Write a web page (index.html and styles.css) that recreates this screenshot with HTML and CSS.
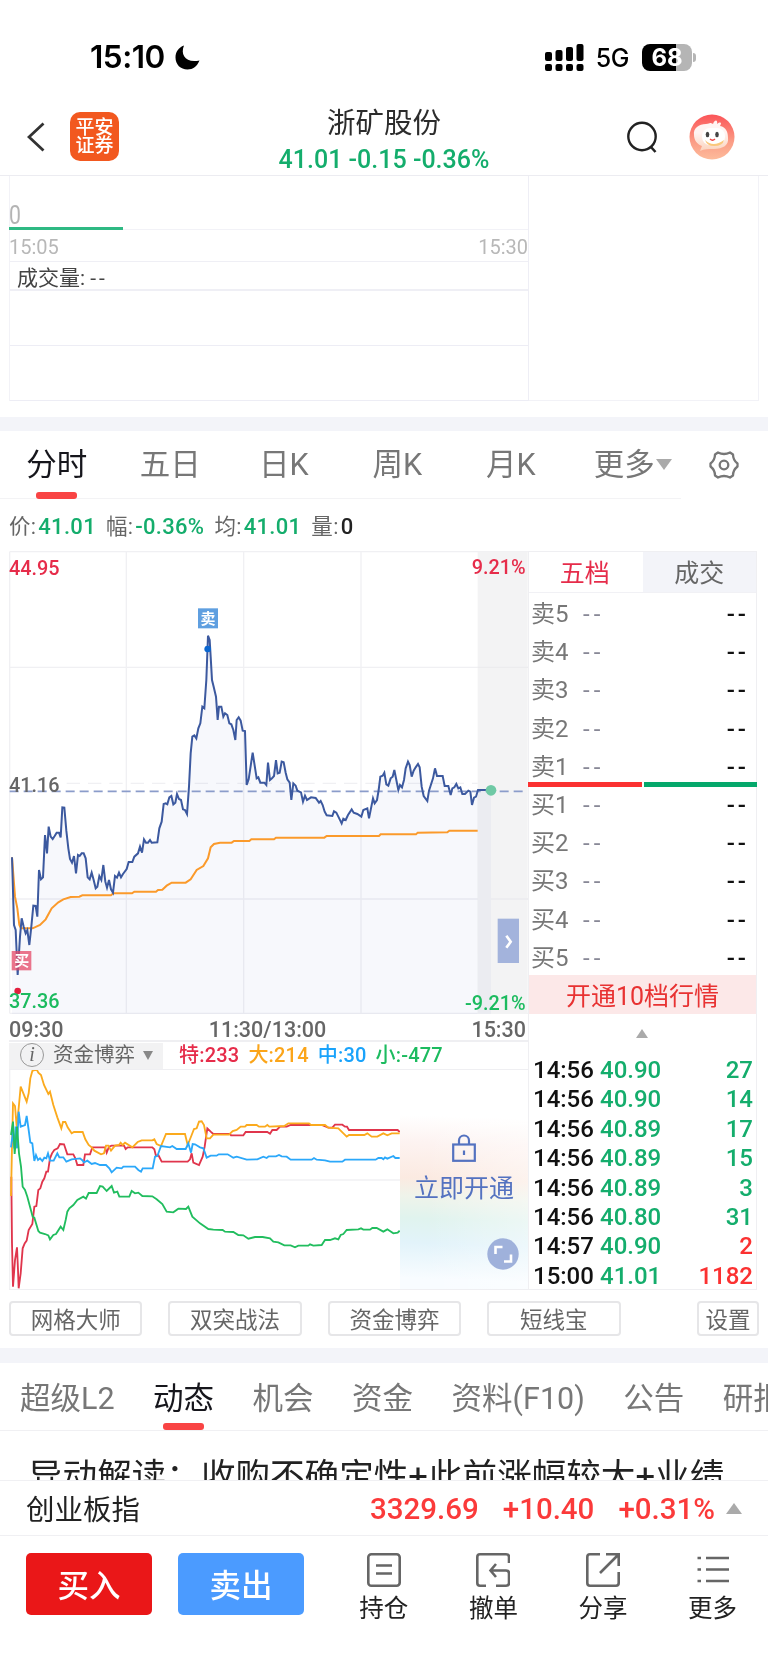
FILE: index.html
```html
<!DOCTYPE html>
<html lang="zh-CN">
<head>
    <meta charset="UTF-8">
    <meta name="viewport" content="width=device-width, initial-scale=1.0">
    <title>浙矿股份</title>
    <link rel="stylesheet" href="styles.css">
</head>
<body>
    <div class="status-bar">
        <span class="clock">15:10</span>
        <svg class="moon" width="25" height="25" viewBox="0 0 25 25"><path d="M9 0.5C5 10 11 18.500 24.500 15.500C22 21.500 18 24.500 12.500 24.500C5.500 24.500 0.500 19.500 0.500 12.500C0.500 7 3.500 2.500 9 0.500Z" fill="#000"/></svg>
        <svg class="signal" width="39" height="27" viewBox="0 0 39 27">
            <g fill="#000">
                <rect x="0" y="8" width="7" height="9" rx="2"/><rect x="10.500" y="6" width="7" height="11" rx="2"/>
                <rect x="21" y="3" width="7" height="14" rx="2"/><rect x="31.500" y="0" width="7" height="17" rx="2"/>
                <rect x="0" y="20" width="7" height="7" rx="2"/><rect x="10.500" y="20" width="7" height="7" rx="2"/>
                <rect x="21" y="20" width="7" height="7" rx="2"/><rect x="31.500" y="20" width="7" height="7" rx="2"/>
            </g>
        </svg>
        <span class="network">5G</span>
        <span class="battery">68</span>
        <span class="battery-cap"></span>
    </div>

    <header class="nav">
        <div class="nav-side">
            <svg class="back" width="18" height="30" viewBox="0 0 18 30"><path d="M16.500 1.500L2 15L16.500 28.500" fill="none" stroke="#333" stroke-width="2.800"/></svg>
            <div class="logo"><span>平安</span><span>证券</span></div>
        </div>
        <div class="nav-title">
            <h1>浙矿股份</h1>
            <p>41.01 -0.15 -0.36%</p>
        </div>
        <div class="nav-side nav-right">
            <svg width="31" height="32" viewBox="0 0 31 32"><circle cx="15" cy="15.500" r="13.700" fill="none" stroke="#222" stroke-width="2.400"/><path d="M23.500 25.500L28.500 31" stroke="#222" stroke-width="2.600"/></svg>
            <svg class="avatar" width="46" height="46" viewBox="0 0 46 46">
                <defs>
                    <linearGradient id="avatarBg" x1="0" y1="0" x2="0" y2="1"><stop offset="0" stop-color="#fb5458"/><stop offset=".6" stop-color="#fb9c85"/><stop offset="1" stop-color="#fdbb9b"/></linearGradient>
                    <linearGradient id="face" x1="0" y1="0" x2="0" y2="1"><stop offset=".4" stop-color="#fff4f2"/><stop offset="1" stop-color="#fbd3bd"/></linearGradient>
                </defs>
                <circle cx="23" cy="23" r="22.500" fill="url(#avatarBg)"/>
                <path d="M5 21C4 14 10 10 17 10C21 10 20 8 24 10C26 5 29 6 28 10C32 7 33 9 31 12C37 13 39 18 39 24C40 31 34 35 25 35C20 35 15 35 11 37L13 32C8 30 5 26 5 21Z" fill="url(#face)"/>
                <rect x="13" y="14" width="23" height="17" rx="8" fill="#fff"/>
                <path d="M16 26Q24 34 35 26Q34 32 25 32Q18 32 16 26Z" fill="#fac87c"/>
                <ellipse cx="18.500" cy="20.500" rx="1.800" ry="2.800" fill="#444"/><ellipse cx="28" cy="20.500" rx="1.800" ry="2.800" fill="#444"/>
                <path d="M21 25Q23.500 27.500 26 25" fill="none" stroke="#e44" stroke-width="1.300"/>
            </svg>
        </div>
    </header>

    <section class="after-hours">
        <div class="after-chart">
            <div class="after-price"><span>0</span></div>
            <div class="after-times"><span>15:05</span><span>15:30</span></div>
            <div class="after-volume">成交量: <span>--</span></div>
            <div class="after-cell"></div>
            <div class="after-cell"></div>
        </div>
        <div class="after-side"></div>
    </section>

    <div class="period-bar">
        <div class="period-tabs">
            <span class="active">分时</span>
            <span>五日</span>
            <span>日K</span>
            <span>周K</span>
            <span>月K</span>
            <span>更多<i class="arrow-down"></i></span>
        </div>
        <svg class="gear" width="30" height="30" viewBox="0 0 30 30" fill="none" stroke="#777" stroke-width="2.300" stroke-linejoin="round"><path d="M9 2.500Q15 5.500 21 2.500L24 4.500Q24 10 28.500 13.500V16.500Q24 20 24 25.500L21 27.500Q15 24.500 9 27.500L6 25.500Q6 20 1.500 16.500V13.500Q6 10 6 4.500Z"/><circle cx="15" cy="15" r="4.300"/></svg>
    </div>

    <div class="quote-line">
        <span>价:<b>41.01</b></span>
        <span>幅:<b>-0.36%</b></span>
        <span>均:<b>41.01</b></span>
        <span>量:<b class="dark">0</b></span>
    </div>

    <main class="market">
        <div class="charts">
            <svg class="price-chart" viewBox="27 33 1557 1389">
                <g fill="none" stroke="#f0f0f3" stroke-width="4">
                    <path d="M29 35H1584M29 382H1584M29 1077H1584M29 1420H1584M29 35V1420M379 35V1420M731 35V1420M1083 35V1420"/>
                    <path d="M200 730H1433" stroke-dasharray="40 24"/>
                </g>
                <rect x="1433" y="35" width="150" height="1387" fill="#f3f3f4"/>
                <path d="M1433 382H1584M1433 1077H1584" stroke="#ececee" stroke-width="4"/>
                <path class="area" d="M36,952 42,1155 47,1170 53,1305 60,1190 65,1135 71,1160 77,1180 82,1170 88,1215 94,1160 100,1097 107,1098 112,1130 117,990 123,1018 129,1012 135,885 141,940 146,860 152,890 158,897 170,878 177,878 182,892 187,802 193,803 199,872 205,925 210,957 216,968 222,948 228,1000 234,945 251,940 257,955 263,1012 275,998 287,1045 298,1008 304,1020 310,975 316,1025 327,1020 339,1058 345,1008 357,998 369,1002 386,966 397,966 414,940 426,938 432,898 472,907 478,865 485,845 491,792 514,768 531,762 549,808 561,822 567,740 572,640 577,590 589,595 601,550 607,500 613,505 619,420 624,287 629,300 636,420 648,470 653,540 657,500 670,530 682,525 694,553 706,600 710,540 722,542 735,573 740,735 758,638 770,715 799,735 804,668 810,720 828,660 839,698 845,665 857,698 874,780 880,730 903,757 909,785 933,772 962,783 980,826 1025,850 1055,808 1084,830 1107,835 1119,775 1141,710 1153,698 1165,737 1183,690 1195,750 1212,720 1224,665 1235,710 1254,672 1265,740 1282,783 1305,685 1328,708 1352,765 1369,732 1387,762 1411,755 1416,795 1434,750 1433,1422 36,1422Z"/>
                <rect x="1433" y="750" width="40" height="672" fill="#ebecf1"/>
                <path d="M29 754H1580" stroke="#8b9cca" stroke-width="5" stroke-dasharray="27 15"/>
                <polyline class="average" points="36,952 45,1070 52,1105 58,1155 63,1165 98,1165 120,1155 137,1138 155,1105 175,1087 190,1078 212,1071 238,1070 247,1066 333,1066 340,1060 396,1060 403,1055 468,1055 474,1050 487,1049 500,1037 515,1028 557,1028 572,1018 590,990 610,978 624,955 632,922 642,912 660,908 695,908 702,903 748,903 754,898 822,898 828,893 973,893 980,888 1137,888 1142,883 1248,883 1253,878 1342,877 1348,872 1433,872"/>
                <polyline class="price" points="36,952 42,1155 47,1170 53,1305 60,1190 65,1135 71,1160 77,1180 82,1170 88,1215 94,1160 100,1097 107,1098 112,1130 117,990 123,1018 129,1012 135,885 141,940 146,860 152,890 158,897 164,888 170,878 177,878 182,892 187,802 193,803 199,872 205,925 210,957 216,968 222,948 228,1000 234,945 239,948 245,940 251,940 257,955 263,1012 269,1018 275,998 281,1020 287,1045 292,1040 298,1008 304,1020 310,975 316,1025 321,1043 327,1020 333,1048 339,1058 345,1008 351,1013 357,998 363,1012 369,1002 380,987 386,966 397,966 403,950 414,940 420,920 426,938 432,898 438,908 444,908 450,900 455,908 472,907 478,865 485,845 491,792 497,790 502,793 508,772 514,768 520,793 526,788 531,762 537,777 543,780 549,808 555,810 561,822 567,740 572,640 577,590 583,586 589,595 595,565 601,550 607,500 613,505 619,420 624,287 629,300 632,350 636,420 641,440 648,470 653,540 657,500 664,500 670,530 675,520 682,525 688,550 694,553 700,570 706,600 710,540 716,532 722,542 728,572 735,573 740,735 746,718 758,638 770,715 775,712 781,728 793,728 799,735 804,668 810,720 816,715 822,708 828,660 833,700 839,698 845,665 851,667 857,698 862,718 869,728 874,780 880,730 887,737 892,752 903,757 909,785 915,767 921,780 933,772 947,774 957,788 962,783 968,795 974,815 980,826 997,828 1002,814 1009,818 1015,830 1025,850 1030,836 1037,840 1044,825 1055,808 1061,818 1072,822 1084,830 1090,810 1102,805 1107,835 1119,775 1124,790 1131,780 1136,750 1141,710 1148,707 1153,698 1159,733 1165,737 1172,715 1178,710 1183,690 1189,720 1195,750 1200,735 1206,742 1212,720 1217,685 1224,665 1229,675 1235,710 1241,692 1247,682 1254,672 1259,682 1265,740 1271,768 1282,783 1287,752 1299,715 1305,685 1311,708 1328,708 1334,738 1345,738 1352,765 1357,745 1363,742 1369,732 1375,745 1381,742 1387,762 1395,762 1405,752 1411,755 1416,795 1422,773 1428,770 1434,750 1473,750"/>
                <circle cx="1473" cy="751" r="16" fill="#6fc9a5"/>
                <circle cx="623" cy="327" r="10" fill="#0b67d0"/>
                <circle cx="53" cy="1353" r="10" fill="#e3203e"/>
                <rect x="594" y="205" width="60" height="60" fill="#5f9fe0"/>
                <rect x="35" y="1233" width="59" height="58" fill="#e54867" fill-opacity=".75"/>
                <g class="marker"><text x="624" y="251">卖</text><text x="65" y="1279">买</text></g>
                <g class="labels">
                    <text class="up" x="27" y="105">44.95</text>
                    <text class="up end" x="1577" y="101">9.21%</text>
                    <text x="27" y="755">41.16</text>
                    <text class="down" x="27" y="1405">37.36</text>
                    <text class="down end" x="1577" y="1410">-9.21%</text>
                </g>
                <rect x="1493" y="1136" width="64" height="133" fill="#a3b3dc"/>
                <path d="M1519 1187L1532 1205L1519 1223" fill="none" stroke="#fff" stroke-width="8"/>
            </svg>
            <div class="time-axis"><span>09:30</span><span>11:30/13:00</span><span>15:30</span></div>
            <div class="flow-head">
                <div class="flow-select"><i class="info">i</i>资金博弈<i class="arrow-down small"></i></div>
                <span class="super">特:233</span>
                <span class="large">大:214</span>
                <span class="middle">中:30</span>
                <span class="little">小:-477</span>
            </div>
            <div class="flow-body">
                <svg class="flow-chart" viewBox="27 120 1173 657">
                    <path d="M27 450H1200M29 120V777" stroke="#f1f1f3" stroke-width="4"/>
                    <polyline stroke="#e0354c" points="34,440 36,640 39,770 45,690 51,652 54,720 56,775 62,730 68,655 74,640 80,632 86,600 97,582 103,530 109,528 115,480 121,475 127,455 133,445 139,425 144,425 150,385 156,370 163,360 173,355 180,342 192,343 202,373 220,373 226,385 232,405 250,405 255,373 270,373 277,352 315,352 320,368 327,350 335,347 372,347 377,357 383,352 457,352 463,358 468,378 475,375 485,395 563,395 570,388 575,370 580,398 597,405 608,380 614,350 622,295 632,305 640,312 690,312 693,316 730,316 737,306 802,306 810,311 817,300 830,300 840,290 860,290 872,285 965,285 985,293 997,293 1005,284 1027,284 1035,290 1041,290 1047,300 1193,300 1199,306"/>
                    <polyline stroke="#fbaa1d" points="33,498 36,350 39,220 45,228 50,290 56,235 62,170 68,185 80,215 86,190 91,145 97,123 110,118 115,128 123,135 132,165 145,192 150,185 160,225 172,262 184,295 189,276 196,276 203,292 215,310 222,306 248,306 256,328 266,345 275,352 283,362 303,373 312,370 318,347 325,347 333,362 345,347 357,345 362,338 368,345 375,338 397,352 413,336 425,331 457,331 463,328 470,342 483,348 498,312 555,312 563,345 575,315 582,297 590,295 597,275 605,274 612,285 620,325 630,325 640,314 687,314 698,303 710,300 722,290 735,290 740,285 770,285 777,290 795,290 802,285 808,290 853,288 865,280 927,280 933,285 975,285 985,293 1015,295 1040,320 1047,315 1093,315 1102,310 1115,320 1132,320 1150,310 1162,316 1175,310 1199,310"/>
                    <polyline stroke="#2ba8fa" points="33,352 39,305 43,355 47,290 51,355 56,245 62,290 75,285 80,258 86,300 91,337 97,340 103,393 108,375 114,390 120,385 127,393 133,383 139,385 144,370 150,392 161,392 172,370 178,382 190,382 199,395 215,388 240,385 246,390 252,397 262,392 275,402 285,399 300,405 318,405 328,415 335,427 350,413 365,415 370,410 405,410 415,420 423,425 428,415 458,415 465,380 472,378 483,348 510,352 517,348 530,357 557,357 565,340 573,368 578,342 585,343 600,352 610,355 620,383 632,377 650,377 656,373 683,373 700,383 710,380 740,389 772,388 790,380 800,384 806,379 828,379 837,375 845,379 860,380 872,389 935,389 942,384 950,389 975,391 990,395 1027,395 1035,389 1127,389 1135,384 1145,384 1150,388 1155,382 1162,386 1180,378 1186,384 1199,384"/>
                    <polyline stroke="#21bd5e" points="33,315 39,275 44,372 51,290 57,370 63,410 68,470 75,480 82,500 98,560 103,563 115,603 120,608 135,612 145,616 150,628 160,615 168,612 182,590 190,600 197,570 202,545 208,535 220,525 232,510 250,500 258,506 266,489 290,489 300,468 308,470 320,483 335,468 342,488 352,485 358,500 388,500 395,483 405,490 415,488 427,498 457,499 470,508 487,522 500,545 520,547 535,536 558,537 565,530 577,560 600,580 625,597 640,599 668,600 675,605 700,606 715,615 730,616 745,626 765,621 788,621 810,625 820,635 835,637 853,646 872,646 885,652 895,647 925,647 930,643 940,647 965,645 975,630 990,630 1005,625 1015,628 1022,615 1030,612 1040,600 1075,598 1083,595 1090,599 1110,599 1117,594 1130,594 1150,605 1162,598 1180,610 1193,608 1199,602"/>
                </svg>
                <div class="unlock">
                    <svg width="24" height="28" viewBox="0 0 24 28" fill="none" stroke="#5472c0" stroke-width="2.200"><rect x="1.200" y="10.500" width="21.600" height="16.300"/><path d="M7 10.500V6.500A5 5 0 0 1 17 6.500V10.500M12 16.500V21"/></svg>
                    <span>立即开通</span>
                    <svg class="expand" width="32" height="32" viewBox="0 0 32 32"><circle cx="16" cy="16" r="15.700" fill="#9fb1db"/><path d="M8.500 16V9H15.500M24 16.500V23.500H17" fill="none" stroke="#fff" stroke-width="2.600"/></svg>
                </div>
            </div>
        </div>

        <aside class="depth">
            <div class="depth-tabs"><span class="active">五档</span><span>成交</span></div>
            <ul class="book">
                <li>卖5<i>--</i><b>--</b></li>
                <li>卖4<i>--</i><b>--</b></li>
                <li>卖3<i>--</i><b>--</b></li>
                <li>卖2<i>--</i><b>--</b></li>
                <li class="last-ask">卖1<i>--</i><b>--</b></li>
                <li>买1<i>--</i><b>--</b></li>
                <li>买2<i>--</i><b>--</b></li>
                <li>买3<i>--</i><b>--</b></li>
                <li>买4<i>--</i><b>--</b></li>
                <li>买5<i>--</i><b>--</b></li>
            </ul>
            <div class="promo">开通10档行情</div>
            <div class="collapse"><i class="arrow-up"></i></div>
            <ul class="trades">
                <li><span>14:56</span><b>40.90</b><em>27</em></li>
                <li><span>14:56</span><b>40.90</b><em>14</em></li>
                <li><span>14:56</span><b>40.89</b><em>17</em></li>
                <li><span>14:56</span><b>40.89</b><em>15</em></li>
                <li><span>14:56</span><b>40.89</b><em>3</em></li>
                <li><span>14:56</span><b>40.80</b><em>31</em></li>
                <li><span>14:57</span><b>40.90</b><em class="buy">2</em></li>
                <li><span>15:00</span><b>41.01</b><em class="buy">1182</em></li>
            </ul>
        </aside>
    </main>

    <div class="tools">
        <button>网格大师</button>
        <button>双突战法</button>
        <button>资金博弈</button>
        <button>短线宝</button>
        <button class="setting">设置</button>
    </div>

    <div class="info-tabs">
        <span>超级L2</span>
        <span class="active">动态</span>
        <span>机会</span>
        <span>资金</span>
        <span>资料(F10)</span>
        <span>公告</span>
        <span>研报</span>
    </div>

    <div class="news">异动解读：收购不确定性+此前涨幅较大+业绩</div>

    <div class="index-row">
        <span class="index-name">创业板指</span>
        <span>3329.69</span>
        <span>+10.40</span>
        <span>+0.31%</span>
        <i class="arrow-up"></i>
    </div>

    <footer class="actions">
        <button class="buy-btn">买入</button>
        <button class="sell-btn">卖出</button>
        <nav>
            <a><svg viewBox="0 0 34 34"><rect x="1.300" y="1.300" width="31.400" height="31.400" rx="3"/><path d="M9 12.500H25M9 20.500H25"/></svg>持仓</a>
            <a><svg viewBox="0 0 34 34"><path d="M33 10V4Q33 1.300 30 1.300H4Q1.300 1.300 1.300 4V30Q1.300 32.700 4 32.700H10M20 11L14.500 17.500L20 24M15 17.500H30Q33 17.500 33 20.500V30Q33 32.700 30 32.700H20"/></svg>撤单</a>
            <a><svg viewBox="0 0 34 34"><path d="M14 1.300H4Q1.300 1.300 1.300 4V30Q1.300 32.700 4 32.700H30Q32.700 32.700 32.700 30V19M20 1.300H32.700V13M32 2L14 20"/></svg>分享</a>
            <a><svg viewBox="0 0 34 34"><path d="M1.500 5H5M10 5H33M1.500 16.500H5M10 16.500H33M1.500 28H5M10 28H33"/></svg>更多</a>
        </nav>
    </footer>
</body>
</html>
```
FILE: styles.css
```css
* {
    box-sizing: border-box;
}

body {
    margin: 0;
    width: 768px;
    height: 1670px;
    overflow: hidden;
    background: #fff;
    color: #666;
    font-family: Roboto, "Noto Sans CJK SC", sans-serif;
}

h1, p, ul {
    margin: 0;
    padding: 0;
    font-weight: 400;
}

ul {
    list-style: none;
}

i, em {
    font-style: normal;
}

b {
    font-weight: 500;
}

svg {
    display: block;
    flex: none;
}

button {
    padding: 0;
    font-family: inherit;
}

.arrow-down, .arrow-up {
    display: inline-block;
    flex: none;
    border: 8px solid transparent;
}

.arrow-down {
    border-top: 11px solid #aaa;
    border-bottom: 0;
}

.arrow-up {
    border-bottom: 11px solid #aaa;
    border-top: 0;
}

.arrow-down.small {
    border-width: 9px 5px 0;
    border-top-color: #888;
}

/* status bar */
.status-bar {
    display: flex;
    align-items: center;
    height: 97px;
    padding: 17px 72px 0 90px;
    color: #000;
}

.clock {
    width: 85px;
    font: 600 31.500px/30px Inter, sans-serif;
    letter-spacing: -0.5px;
}

.signal {
    margin-left: auto;
}

.network {
    margin: 2px 13px 0 12px;
    font: 500 25px/24px Inter, sans-serif;
    letter-spacing: -0.5px;
}

.battery {
    width: 50px;
    height: 27px;
    border-radius: 8px;
    background: linear-gradient(90deg, #000 68%, #b5b5b5 68%);
    color: #fff;
    font: 700 24px/27px Inter, sans-serif;
    text-align: center;
}

.battery-cap {
    width: 3px;
    height: 9px;
    margin-left: 1px;
    border-radius: 0 3px 3px 0;
    background: #b5b5b5;
}

/* title */
.nav {
    display: flex;
    height: 79px;
    border-bottom: 1px solid #ececf1;
}

.nav-side {
    display: flex;
    align-items: center;
    width: 234px;
    height: 79px;
    padding-left: 27px;
}

.logo {
    display: flex;
    flex-direction: column;
    justify-content: center;
    width: 49px;
    height: 49px;
    margin-left: 25px;
    border-radius: 10px;
    background: #f2581f;
    color: #fff;
    font-size: 19px;
    font-weight: 500;
    line-height: 18px;
    text-align: center;
}

.nav-title {
    flex: 1;
    padding-top: 8px;
    text-align: center;
}

.nav-title h1 {
    color: #2c2c2c;
    font-size: 28.500px;
    line-height: 38px;
}

.nav-title p {
    color: #14ad6c;
    font-size: 25px;
    font-weight: 500;
    line-height: 33px;
}

.nav-right {
    justify-content: flex-end;
    padding: 0 33px 0 0;
}

.avatar {
    margin-left: 31px;
}

/* after-hours chart */
.after-hours {
    display: flex;
    height: 241px;
    padding: 0 9px 16px 9px;
}

.after-chart {
    width: 520px;
    border-left: 1px solid #f2f2f7;
    border-right: 1px solid #eeeef5;
}

.after-side {
    flex: 1;
    border-right: 1px solid #f2f2f7;
    border-bottom: 1px solid #f2f2f7;
}

.after-price {
    height: 54px;
    padding-top: 26px;
    border-bottom: 1px solid #f2f2f7;
    color: #b4b4b4;
    font-size: 25px;
    line-height: 27px;
}

.after-price span {
    display: block;
    height: 26px;
    margin-left: -1px;
    transform: scaleX(0.85);
    transform-origin: left;
}

.after-price::after {
    content: "";
    display: block;
    width: 114px;
    height: 3px;
    margin: -1px 0 0 -1px;
    background: #2fb983;
}

.after-times {
    display: flex;
    justify-content: space-between;
    height: 31px;
    margin-left: -1px;
    color: #b8b8b8;
    font-size: 20px;
    line-height: 35px;
}

.after-volume {
    height: 30px;
    padding-left: 7px;
    border: solid #efeff5;
    border-width: 1px 0 2px;
    color: #444;
    font-size: 21px;
    line-height: 32px;
}

.after-volume span {
    letter-spacing: 3px;
}

.after-cell {
    height: 55px;
    border-bottom: 1px solid #ededf5;
}

/* period tabs */
.period-bar {
    display: flex;
    height: 82px;
    border-top: 14px solid #f3f4f9;
}

.period-tabs {
    display: grid;
    grid-template-columns: repeat(6, 1fr);
    width: 681px;
    height: 68px;
    border-bottom: 1px solid #f3f3f5;
    color: #777;
    font-size: 30.500px;
    line-height: 67px;
    text-align: center;
}

.period-tabs .arrow-down {
    margin: 0 -17px 5px 1px;
}

.period-tabs .active, .info-tabs .active {
    color: #16161c;
    font-weight: 400;
}

.active::after {
    content: "";
    display: block;
    width: 41px;
    height: 7px;
    margin: -6px auto 0;
    border-radius: 3px;
    background: #f94444;
}

.gear {
    margin: 19px 0 0 28px;
}

.quote-line {
    display: flex;
    gap: 10px;
    height: 52px;
    padding-left: 9px;
    font-size: 21.500px;
    line-height: 56px;
    letter-spacing: 0.300px;
}

.quote-line b {
    margin-left: 2px;
    font-size: 22px;
    color: #14ad6c;
}

.quote-line .dark {
    color: #222;
}

/* charts */
.market {
    display: flex;
    width: 757px;
    padding-left: 9px;
}

.charts {
    width: 519px;
    height: 739px;
    border-bottom: 1px solid #efeff2;
}

.price-chart {
    width: 519px;
    height: 463px;
}

.area {
    fill: #f7f8fc;
    mix-blend-mode: multiply;
}

.price, .average {
    fill: none;
    stroke: #3c599f;
    stroke-width: 6;
}

.average {
    stroke: #fb9a2b;
}

.marker {
    fill: #fff;
    font-size: 45px;
    font-weight: 700;
    text-anchor: middle;
}

.labels {
    fill: #666;
    font-size: 59.500px;
    font-weight: 500;
}

.up {
    fill: #e62c4a;
}

.down {
    fill: #1cbb5f;
}

.end {
    text-anchor: end;
}

.time-axis {
    display: flex;
    justify-content: space-between;
    height: 28px;
    padding-right: 2px;
    border-bottom: 2px solid #efeff2;
    font-size: 21.500px;
    font-weight: 500;
    line-height: 31px;
}

.flow-head {
    display: flex;
    align-items: center;
    gap: 10px;
    height: 28px;
    border-bottom: 1px solid #efeff2;
    font-size: 20px;
    font-weight: 500;
    line-height: 26px;
    white-space: nowrap;
}

.flow-head span {
    margin-top: -2px;
    letter-spacing: 0.200px;
}

.flow-head .large, .flow-head .middle, .flow-head .little {
    margin-left: -1px;
}

.flow-select {
    display: flex;
    align-items: center;
    width: 154px;
    height: 26px;
    margin-right: 6px;
    padding: 0 0 1px 11px;
    background: #f2f2f3;
    font-size: 20.500px;
    font-weight: 400;
}

.info {
    width: 24px;
    height: 24px;
    margin-right: 9px;
    border: 1px solid #999;
    border-radius: 50%;
    font: italic 20px/21px "Liberation Serif", serif;
    text-align: center;
}

.flow-select .arrow-down {
    margin-left: 8px;
}

.super {
    color: #e62c4a;
}

.large {
    color: #fba51a;
}

.middle {
    color: #1aa3fb;
}

.little {
    color: #1cbb5f;
}

.flow-body {
    display: flex;
    height: 219px;
}

.flow-chart {
    width: 391px;
    height: 219px;
    fill: none;
    stroke-width: 5.500;
}

.unlock {
    position: relative;
    display: flex;
    flex-direction: column;
    align-items: center;
    width: 128px;
    padding: 64px 0 0 0;
    background: linear-gradient(90deg, rgba(255, 255, 255, 0) 20%, rgba(255, 255, 255, 0.4)), linear-gradient(182deg, #fff 22%, #fdf3f1 34%, #fbeae1 50%, #eff3ea 58%, #e0f3ee 68%, #e2f3fa 79%, #f8fcff 95%);
    color: #5472c0;
    font-size: 25px;
    line-height: 55px;
}

.unlock span {
    margin-top: -1px;
}

.expand {
    position: absolute;
    right: 9px;
    bottom: 19px;
}

/* order book */
.depth {
    width: 229px;
    height: 739px;
    border: 1px solid #efeff2;
}

.depth-tabs {
    display: grid;
    grid-template-columns: 1fr 1fr;
    height: 41px;
    border-bottom: 1px solid #f1f1f5;
    font-size: 25px;
    line-height: 38px;
    text-align: center;
}

.depth-tabs span {
    height: 40px;
    padding-top: 3px;
}

.depth-tabs span:last-child {
    background: #f3f4f9;
}

.depth-tabs .active {
    padding-right: 2px;
    color: #e62c4a;
}

.depth-tabs .active::after {
    display: none;
}

.book {
    height: 382px;
    padding-top: 2px;
}

.book li {
    position: relative;
    display: grid;
    grid-template-columns: 52px 1fr auto;
    height: 38.2px;
    padding: 0 8px 0 2px;
    color: #777;
    font-size: 24px;
    line-height: 38px;
}

.book i {
    color: #888896;
    letter-spacing: 4px;
}

.book b {
    color: #111;
    letter-spacing: 3px;
    margin-right: -1px;
}

.last-ask::after {
    content: "";
    position: absolute;
    left: -1px;
    bottom: -1px;
    width: 229px;
    height: 5px;
    background: linear-gradient(90deg, #fb3131 114px, #fff 114px, #fff 116px, #05a86b 116px);
}

.promo {
    height: 39px;
    background: #fce8e8;
    color: #e83232;
    font-size: 25px;
    line-height: 43px;
    text-align: center;
}

.collapse {
    height: 41px;
    padding: 15px 2px 0 0;
    line-height: 0;
    text-align: center;
}

.collapse .arrow-up {
    border-width: 0 6px 9px;
}

.trades li {
    display: grid;
    grid-template-columns: 67px 1fr auto;
    height: 29.4px;
    padding: 0 3px 0 4px;
    color: #111;
    font-size: 24px;
    font-weight: 500;
    line-height: 31px;
}

.trades b, .trades em {
    color: #14ad6c;
}

.trades .buy {
    color: #fb3131;
}

/* indicator shortcuts */
.tools {
    display: flex;
    gap: 26px;
    height: 58px;
    padding: 11px 9px 0;
}

.tools button {
    width: 133.400px;
    height: 35px;
    border: 2px solid #e6e6e8;
    border-radius: 4px;
    background: #fff;
    color: #666;
    font-size: 22.500px;
    line-height: 34px;
}

.tools .setting {
    width: 62px;
    margin-left: auto;
}

.info-tabs {
    display: flex;
    gap: 38.500px;
    height: 83px;
    padding-left: 20px;
    border-top: 15px solid #f3f4f9;
    border-bottom: 1px solid #f0f0f3;
    color: #777;
    font-size: 30.500px;
    line-height: 72px;
    white-space: nowrap;
}

.info-tabs .active::after {
    margin-top: -12px;
}

.news {
    height: 49px;
    padding: 21px 28px 0;
    overflow: hidden;
    color: #222;
    font-size: 34.600px;
    line-height: 48px;
    white-space: nowrap;
}

.index-row {
    display: flex;
    align-items: center;
    gap: 24px;
    height: 56px;
    padding: 1px 26px 0;
    border: solid #f0f0f3;
    border-width: 1px 0;
    color: #fb3a3a;
    font-size: 29.500px;
    font-weight: 500;
}

.index-name {
    margin: -3px auto 0 0;
    color: #222;
    font-size: 28.500px;
    font-weight: 400;
}

.index-row .arrow-up {
    margin-left: -13px;
}

/* bottom bar */
.actions {
    display: flex;
    gap: 26px;
    padding: 17px 0 0 26px;
}

.actions button {
    width: 126px;
    height: 62px;
    padding-bottom: 3px;
    border: 0;
    border-radius: 5px;
    color: #fff;
    font-size: 31.500px;
    font-weight: 500;
}

.buy-btn {
    background: #ea1718;
}

.sell-btn {
    background: #4b9bff;
}

.actions nav {
    display: grid;
    grid-template-columns: repeat(4, 109.600px);
    margin-left: -1px;
}

.actions a {
    display: flex;
    flex-direction: column;
    align-items: center;
    color: #222;
    font-size: 24.500px;
    line-height: 43px;
}

.actions svg {
    width: 34px;
    height: 34px;
    fill: none;
    stroke: #666;
    stroke-width: 2.600;
}
```
